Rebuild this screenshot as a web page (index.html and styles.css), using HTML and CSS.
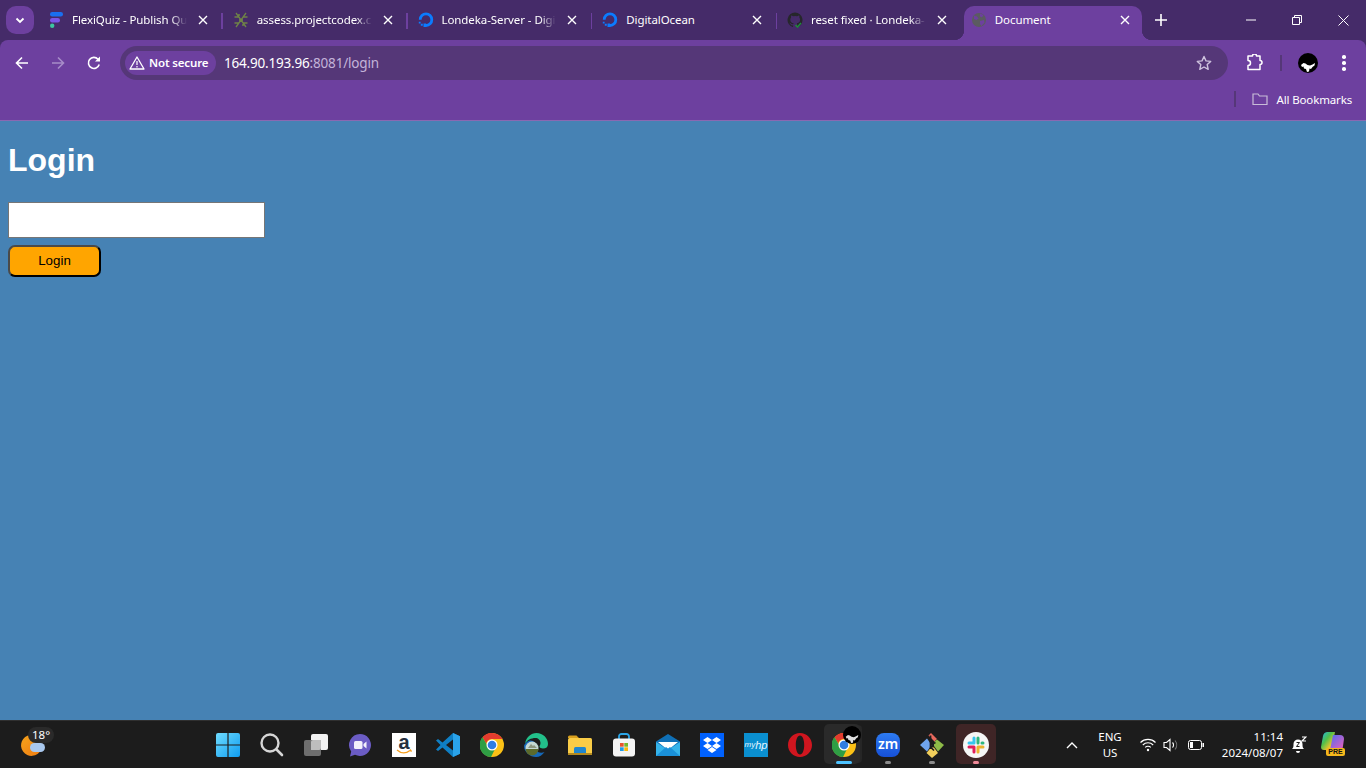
FILE: index.html
```html
<!DOCTYPE html>
<html lang="en">
<head>
<meta charset="utf-8">
<title>Document</title>
<link rel="stylesheet" href="styles.css">
</head>
<body>
<div class="browser">
  <div class="tabstrip">
    <button class="expander"><svg width="12" height="12" viewBox="0 0 12 12"><path d="M2.500 4.500 6 8l3.500-3.500" fill="none" stroke="#fff" stroke-width="1.800"/></svg></button>
    <div class="tab sep">
      <svg class="fav" width="16" height="16" viewBox="0 0 16 16"><rect x="2" y="0" width="13" height="4.500" rx="2.200" fill="#1a6ff0"/><rect x="2" y="6" width="10" height="4.500" rx="2.200" fill="#7a55e8"/><circle cx="4.200" cy="13.800" r="2.200" fill="#3cc6a0"/></svg>
      <span class="title">FlexiQuiz - Publish Qu</span>
      <svg class="close" width="10" height="10" viewBox="0 0 10 10"><path d="M1 1l8 8M9 1 1 9" stroke="#fff" stroke-width="1.400"/></svg>
    </div>
    <div class="tab sep">
      <svg class="fav" width="16" height="16" viewBox="0 0 16 16"><path d="M3 1l10 14M13 1 3 15M1.500 5h4M10.500 11h4M10.500 5h4M1.500 11h4M6 8h4M5 3h2M9 13h2" stroke="#6f8347" stroke-width="1.300" fill="none"/></svg>
      <span class="title">assess.projectcodex.co</span>
      <svg class="close" width="10" height="10" viewBox="0 0 10 10"><path d="M1 1l8 8M9 1 1 9" stroke="#fff" stroke-width="1.400"/></svg>
    </div>
    <div class="tab sep">
      <svg class="fav" width="16" height="16" viewBox="0 0 16 16"><path d="M8 13.500a5.800 5.800 0 1 0-5.800-5.800" fill="none" stroke="#0b7cff" stroke-width="2.800"/><path d="M5.500 11.500h2.500v3.500H5.500zM2.800 11.800h2v2h-2zM.8 9.800h1.800v1.800H.8z" fill="#0b7cff"/></svg>
      <span class="title">Londeka-Server - Digi</span>
      <svg class="close" width="10" height="10" viewBox="0 0 10 10"><path d="M1 1l8 8M9 1 1 9" stroke="#fff" stroke-width="1.400"/></svg>
    </div>
    <div class="tab sep">
      <svg class="fav" width="16" height="16" viewBox="0 0 16 16"><path d="M8 13.500a5.800 5.800 0 1 0-5.800-5.800" fill="none" stroke="#0b7cff" stroke-width="2.800"/><path d="M5.500 11.500h2.500v3.500H5.500zM2.800 11.800h2v2h-2zM.8 9.800h1.800v1.800H.8z" fill="#0b7cff"/></svg>
      <span class="title solid">DigitalOcean</span>
      <svg class="close" width="10" height="10" viewBox="0 0 10 10"><path d="M1 1l8 8M9 1 1 9" stroke="#fff" stroke-width="1.400"/></svg>
    </div>
    <div class="tab">
      <svg class="fav" width="16" height="16" viewBox="0 0 16 16"><path d="M8 .5a7.500 7.500 0 0 0-2.400 14.600c.4.100.5-.2.500-.4v-1.400c-2.100.5-2.500-1-2.500-1-.4-.9-.9-1.100-.9-1.100-.7-.5.100-.5.100-.5.800.100 1.200.8 1.200.8.700 1.200 1.800.8 2.200.6.100-.5.300-.8.500-1-1.700-.2-3.400-.8-3.400-3.700 0-.8.300-1.500.8-2-.1-.2-.3-1 .1-2 0 0 .6-.2 2.100.8a7 7 0 0 1 3.800 0c1.400-1 2.100-.8 2.100-.8.400 1 .1 1.800.1 2 .5.500.8 1.200.8 2 0 2.900-1.800 3.500-3.400 3.700.3.200.5.700.5 1.400v2.100c0 .2.100.5.500.4A7.500 7.500 0 0 0 8 .5z" fill="#26272b"/><path d="M8.500 13l2 2 3.500-4" fill="none" stroke="#1f8a3c" stroke-width="1.500"/></svg>
      <span class="title">reset fixed · Londeka-</span>
      <svg class="close" width="10" height="10" viewBox="0 0 10 10"><path d="M1 1l8 8M9 1 1 9" stroke="#fff" stroke-width="1.400"/></svg>
    </div>
    <div class="tab active">
      <svg class="fav" width="16" height="16" viewBox="0 0 16 16"><circle cx="8" cy="8" r="7" fill="#5b5b60"/><path d="M3 3.500l3 1 1.500 2-2 1.500L3 7zM9 1.500l3.500 1.500-1.500 2.500-2-1zM9 9l4-1 .5 2.500-3 3.500L9 12z" fill="#6d409f"/></svg>
      <span class="title solid">Document</span>
      <svg class="close" width="10" height="10" viewBox="0 0 10 10"><path d="M1 1l8 8M9 1 1 9" stroke="#fff" stroke-width="1.400"/></svg>
    </div>
    <button class="newtab"><svg width="12" height="12" viewBox="0 0 12 12"><path d="M6 0v12M0 6h12" stroke="#fff" stroke-width="1.600"/></svg></button>
    <div class="winctl">
      <span class="winbtn"><svg width="10" height="10" viewBox="0 0 10 10"><path d="M0 5h10" stroke="#fff" stroke-width="1"/></svg></span>
      <span class="winbtn"><svg width="10" height="10" viewBox="0 0 10 10"><path d="M.5 2.500h7v7h-7zM2.500 2.500V.5h7v7h-2" fill="none" stroke="#fff" stroke-width="1"/></svg></span>
      <span class="winbtn"><svg width="11" height="11" viewBox="0 0 11 11"><path d="M.5.500l10 10M10.500.500l-10 10" stroke="#fff" stroke-width="1"/></svg></span>
    </div>
  </div>

  <div class="toolbar">
    <span class="navbtn"><svg width="16" height="16" viewBox="0 0 16 16"><path d="M14 8H3M8 2.500 2.500 8 8 13.500" fill="none" stroke="#fff" stroke-width="1.600"/></svg></span>
    <span class="navbtn"><svg width="16" height="16" viewBox="0 0 16 16"><path d="M2 8h11M8 2.500 13.500 8 8 13.500" fill="none" stroke="#a78cc8" stroke-width="1.600"/></svg></span>
    <span class="navbtn"><svg width="16" height="16" viewBox="0 0 16 16"><path d="M13.200 9.500A5.500 5.500 0 1 1 12 4.200L13.500 5.500" fill="none" stroke="#fff" stroke-width="1.600"/><path d="M14 1.500V6.500H9z" fill="#fff"/></svg></span>
    <div class="omnibox">
      <span class="chip"><svg width="16" height="14" viewBox="0 0 16 14"><path d="M8 1 15 13H1z" fill="none" stroke="#fff" stroke-width="1.300" stroke-linejoin="round"/><path d="M8 5v4M8 10v1.500" stroke="#fff" stroke-width="1.200"/></svg><b>Not secure</b></span>
      <span class="url">164.90.193.96<span class="dim">:8081/login</span></span>
      <svg class="star" width="16" height="16" viewBox="0 0 16 16"><path d="M8 1.500l2 4.400 4.700.5-3.500 3.200 1 4.700L8 12l-4.200 2.300 1-4.700L1.300 6.400 6 5.900z" fill="none" stroke="#cfc3de" stroke-width="1.400" stroke-linejoin="round"/></svg>
    </div>
    <span class="tool-ext"><svg width="18" height="18" viewBox="0 0 18 18"><path d="M2 2.500h4.500a2 2 0 0 1 4 0H14V7a2 2 0 0 1 0 4v5H2v-4a2.500 2.500 0 0 0 0-5z" transform="translate(0 -.5)" fill="none" stroke="#fff" stroke-width="1.500" stroke-linejoin="round"/></svg></span>
    <span class="tool-sep"></span>
    <span class="avatar"><svg width="20" height="20" viewBox="0 0 20 20"><circle cx="10" cy="10" r="10" fill="#000"/><path d="M3 12l2.500-2 2 .5 2 1.500 2.500.5 2.500-1 2.500-1.500-.5 2.500-2 1.500-1.500 2-1.500-.5-.5 3-2 .5-1-3-2-.5-.5-2-1.500.5z" fill="#fff"/></svg></span>
    <span class="menu"><i></i><i></i><i></i></span>
  </div>

  <div class="bookmarks">
    <span class="bm-sep"></span>
    <svg width="16" height="14" viewBox="0 0 16 14"><path d="M1 12.500V2h5l1.500 2H15v8.500z" fill="none" stroke="#c8bcd8" stroke-width="1.200"/></svg>
    <span class="bm-label">All Bookmarks</span>
  </div>

  <main class="page">
    <h1>Login</h1>
    <form class="form">
      <input class="field" type="text">
      <button class="submit" type="button">Login</button>
    </form>
  </main>

  <footer class="taskbar">
    <div class="tb-left">
      <svg class="weather" width="26" height="26" viewBox="0 0 26 26"><defs><linearGradient id="sun" x1="0" y1="0" x2="1" y2="1"><stop offset="0" stop-color="#f5a21b"/><stop offset="1" stop-color="#ef7d12"/></linearGradient></defs><path d="M10 3a10.500 10.500 0 1 0 11 15c-6 1-10-2-11-7-.4-3 0-6 0-8z" fill="url(#sun)"/><circle cx="11" cy="13" r="8" fill="url(#sun)"/><rect x="10" y="11" width="15" height="9" rx="4.500" fill="#a9c8ee"/></svg>
      <span class="temp">18°</span>
    </div>
    <div class="tb-center">
      <span class="task"><svg width="24" height="24" viewBox="0 0 24 24"><defs><linearGradient id="w" x1="0" y1="0" x2="1" y2="1"><stop offset="0" stop-color="#6fdcff"/><stop offset="1" stop-color="#0f9cf0"/></linearGradient></defs><path d="M0 2a2 2 0 0 1 2-2h9.400v11.400H0zM12.600 0H22a2 2 0 0 1 2 2v9.400H12.600zM0 12.600h11.400V24H2a2 2 0 0 1-2-2zM12.600 12.600H24V22a2 2 0 0 1-2 2h-9.400z" fill="url(#w)"/></svg></span>
      <span class="task"><svg width="24" height="24" viewBox="0 0 24 24"><circle cx="10" cy="10" r="8.500" fill="none" stroke="#d6d6d6" stroke-width="2.400"/><path d="M16.500 16.500l5.500 5.500" stroke="#d6d6d6" stroke-width="2.600" stroke-linecap="round"/></svg></span>
      <span class="task"><svg width="26" height="24" viewBox="0 0 26 24"><rect x="8" y="1" width="17" height="16" rx="2" fill="#f2f2f2"/><rect x="1" y="7" width="17" height="16" rx="2" fill="#6e6e6e"/><path d="M8 15V9a2 2 0 0 1 2-2h8v8a2 2 0 0 1-2 2H8z" fill="#bdbdbd"/></svg></span>
      <span class="task"><svg width="24" height="24" viewBox="0 0 24 24"><path d="M12 1a11 11 0 1 1-5 20.800L2 23.500l1.200-5A11 11 0 0 1 12 1z" fill="#6b5cc4"/><rect x="6" y="8" width="8.500" height="8" rx="1.500" fill="#f3f1fb"/><path d="M15.500 11l3-2.500v7l-3-2.500z" fill="#f3f1fb"/></svg></span>
      <span class="task"><span class="amazon"><span class="amz-a">a</span><svg class="amz-smile" width="16" height="6" viewBox="0 0 16 6"><path d="M1 1c4 3.500 9 3.500 13 .5M14 .5l1.500 2" fill="none" stroke="#f59e1c" stroke-width="1.300"/></svg></span></span>
      <span class="task"><svg width="24" height="24" viewBox="0 0 24 24"><path d="M17 0l7 3.200v17.600L17 24 6.500 14.500 2 18 0 16.500 4.500 12 0 7.500 2 6l4.500 3.500z" fill="#0f7fc4"/><path d="M17 0l7 3.200v17.600L17 24z" fill="#2aa3ea"/><path d="M17 6.500 10 12l7 5.500z" fill="#1c1c1c"/></svg></span>
      <span class="task"><svg width="24" height="24" viewBox="0 0 24 24"><circle cx="12" cy="12" r="12" fill="#fbc116"/><path d="M12 0a12 12 0 0 1 10.400 6H12a6 6 0 0 0-5.800 4.500L2.500 4.200A12 12 0 0 1 12 0z" fill="#e33b2e"/><path d="M2.500 4.200 8 13.500a6 6 0 0 0 6.500 3.500L11 24A12 12 0 0 1 2.500 4.200z" fill="#2f9e44"/><circle cx="12" cy="12" r="5.500" fill="#fff"/><circle cx="12" cy="12" r="4.300" fill="#2f7de1"/></svg></span>
      <span class="task"><svg width="24" height="24" viewBox="0 0 24 24"><path d="M1 11C2 4 7 0 12.500 0 19 0 24 5 24 11c0 3-2 4.500-5 4.500-2 0-3.500-.8-3.500-2 0-1 1-1.500 1-3.500 0-3-2.500-5-5-5C7 5 3 7 1 11z" fill="#22c08a"/><path d="M1 11c2-3 5-4.500 8-3 3 1.500 4.500 5 3 8-.5 1 .5 2 2 3 2 1 4.500 1 6.500 0-2 3-5 5-8.500 5C6 24 0 19 0 13c0-.7.300-1.400 1-2z" fill="#1668b8"/><circle cx="8" cy="15" r="6.500" fill="#c4d8d4"/><path d="M1.500 16h13a6.500 6.500 0 0 1-13 0z" fill="#5c6a2c"/><path d="M4 15l3-4 2 2 1-1 3 3z" fill="#8c9680"/></svg></span>
      <span class="task"><svg width="26" height="24" viewBox="0 0 26 24"><path d="M1 4a1.500 1.500 0 0 1 1.500-1.500h7L12 5H1z" fill="#d9a01e"/><rect x="1" y="5" width="24" height="17" rx="1.500" fill="#f9cc47"/><path d="M7 15.500a1.500 1.500 0 0 1 1.500-1.500h9a1.500 1.500 0 0 1 1.500 1.500V22H7z" fill="#1f86cf"/><rect x="1" y="20" width="24" height="2" fill="#b48a1f"/></svg></span>
      <span class="task"><svg width="24" height="24" viewBox="0 0 24 24"><path d="M7 7V3.500A2.500 2.500 0 0 1 9.500 1h5A2.500 2.500 0 0 1 17 3.500V7" fill="none" stroke="#2aa5e8" stroke-width="1.800"/><rect x="1" y="5.500" width="22" height="18" rx="3" fill="#f4f4f4"/><rect x="8" y="10" width="3.700" height="3.700" fill="#e8542d"/><rect x="12.300" y="10" width="3.700" height="3.700" fill="#76b82a"/><rect x="8" y="14.300" width="3.700" height="3.700" fill="#1f9ce8"/><rect x="12.300" y="14.300" width="3.700" height="3.700" fill="#fbb80c"/></svg></span>
      <span class="task"><svg width="24" height="24" viewBox="0 0 24 24"><path d="M12 1 24 8.500V23H0V8.500z" fill="#0f6fb5"/><path d="M0 9 12 17 24 9V23H0z" fill="#35b3ea"/><path d="M2 9h20l-10 8z" fill="#fff"/><path d="M0 23 10 14l2 1.500 2-1.500 10 9z" fill="#1a90d8"/></svg></span>
      <span class="task"><span class="dropbox"><svg width="18" height="16" viewBox="0 0 18 16"><path d="M4.500 0 9 3 4.500 6 0 3zM13.500 0 18 3l-4.500 3L9 3zM4.500 6 9 9l-4.500 3L0 9zM13.500 6 18 9l-4.500 3L9 9zM4.500 13l4.500-3 4.500 3L9 16z" fill="#fff"/></svg></span></span>
      <span class="task"><span class="myhp"><i>my</i><b>hp</b></span></span>
      <span class="task"><svg width="24" height="24" viewBox="0 0 24 24"><path fill-rule="evenodd" d="M12 0c6.600 0 12 5.400 12 12s-5.400 12-12 12S0 18.600 0 12 5.400 0 12 0zm0 2.500c-2.500 0-4.200 4.200-4.200 9.500s1.700 9.500 4.200 9.500 4.200-4.200 4.200-9.500-1.700-9.500-4.200-9.500z" fill="#d0161f"/></svg></span>
      <span class="task task-open task-active"><svg width="24" height="24" viewBox="0 0 24 24"><circle cx="12" cy="12" r="12" fill="#fbc116"/><path d="M12 0a12 12 0 0 1 10.400 6H12a6 6 0 0 0-5.800 4.500L2.500 4.200A12 12 0 0 1 12 0z" fill="#e33b2e"/><path d="M2.500 4.200 8 13.500a6 6 0 0 0 6.500 3.500L11 24A12 12 0 0 1 2.500 4.200z" fill="#2f9e44"/><circle cx="12" cy="12" r="5.500" fill="#fff"/><circle cx="12" cy="12" r="4.300" fill="#2f7de1"/></svg><svg class="task-badge" width="18" height="18" viewBox="0 0 20 20"><circle cx="10" cy="10" r="10" fill="#000"/><path d="M3 12l2.500-2 2 .5 2 1.500 2.500.5 2.500-1 2.500-1.500-.5 2.500-2 1.500-1.500 2-1.500-.5-.5 3-2 .5-1-3-2-.5-.5-2-1.500.5z" fill="#ddd"/></svg></span>
      <span class="task task-run"><span class="zoom">zm</span></span>
      <span class="task task-run"><svg width="26" height="26" viewBox="0 0 26 26"><path d="M8 6.500l4.500 6.500L8 19.500 1 13z" fill="#6fa4ee"/><path d="M9.500 3.500 12 1l6 6-2.500 2.500z" fill="#e8685c"/><path d="M18 7.500 25 13l-6 6.500-4-5.500 0-4z" fill="#8ebb48"/><path d="M7.500 21 12 15.500h3L19 21l-6 5z" fill="#f1cf5b"/><path d="M11.500 3.500v13.500M11.500 13l5-2.500M11.500 15l3.500 3.500" stroke="#1c1c1c" stroke-width="1.700" fill="none"/></svg></span>
      <span class="task task-slack"><svg width="26" height="26" viewBox="0 0 26 26"><circle cx="13" cy="13" r="13" fill="#f6f6f6"/><g stroke-width="3" stroke-linecap="round"><path d="M11 6v5M6 11h5" stroke="#36c5f0" fill="none"/><path d="M15 6v5M20 11h-1" stroke="#2eb67d" fill="none"/><path d="M15 20v-5M20 15h-5" stroke="#ecb22e" fill="none"/><path d="M11 20v-5M6 15h5" stroke="#e01e5a" fill="none"/></g></svg></span>
    </div>
    <div class="tb-right">
      <svg class="tray-chev" width="12" height="8" viewBox="0 0 12 8"><path d="M1 7l5-5 5 5" fill="none" stroke="#fff" stroke-width="1.400"/></svg>
      <span class="lang">ENG<br>US</span>
      <svg class="tray-wifi" width="16" height="14" viewBox="0 0 16 14"><path d="M.5 4.500a10.500 10.500 0 0 1 15 0M2.800 7a7.300 7.300 0 0 1 10.400 0M5.200 9.400a3.900 3.900 0 0 1 5.600 0" fill="none" stroke="#fff" stroke-width="1.100"/><circle cx="8" cy="12" r="1.200" fill="#fff"/></svg>
      <svg class="tray-vol" width="16" height="14" viewBox="0 0 16 14"><path d="M1 4.500h2.500L7 1.500v11l-3.500-3H1z" fill="none" stroke="#fff" stroke-width="1.100"/><path d="M9.500 4.500a3.500 3.500 0 0 1 0 5" fill="none" stroke="#fff" stroke-width="1.100"/><path d="M12 2.500a7 7 0 0 1 0 9" fill="none" stroke="#777" stroke-width="1.100"/></svg>
      <svg class="tray-bat" width="16" height="10" viewBox="0 0 16 10"><rect x=".5" y=".5" width="13" height="9" rx="2" fill="none" stroke="#fff"/><rect x="2" y="2" width="3" height="6" fill="#fff"/><rect x="14.500" y="3" width="1.500" height="4" fill="#fff"/></svg>
      <span class="clock">11:14<br>2024/08/07</span>
      <svg class="tray-bell" width="16" height="18" viewBox="0 0 16 18"><path d="M1 13c1.500-1 1.500-3 1.500-5A4.500 4.500 0 0 1 7 3.500 4.500 4.500 0 0 1 11.500 8c0 2 0 4 1.500 5z" fill="#fff"/><path d="M5 15h4a2 2 0 0 1-4 0z" fill="#fff"/><path d="M5.500 6.500h3l-3 4h3" fill="none" stroke="#1c1c1c" stroke-width="1"/><path d="M11 1h4l-4 4h4" fill="none" stroke="#fff" stroke-width="1.200"/></svg>
      <span class="copilot"><svg width="24" height="20" viewBox="0 0 24 20"><defs><linearGradient id="cp" x1="0" y1="0" x2="1" y2="1"><stop offset="0" stop-color="#1fb5f0"/><stop offset=".4" stop-color="#4fc04a"/><stop offset=".75" stop-color="#f5c52c"/><stop offset="1" stop-color="#f08a3c"/></linearGradient><linearGradient id="cq" x1="0" y1="0" x2="1" y2="1"><stop offset="0" stop-color="#4f6af2"/><stop offset="1" stop-color="#ef5fb8"/></linearGradient></defs><path d="M6 0h8l-3 14a5 5 0 0 1-5 4H3a3 3 0 0 1-3-3l2-11a5 5 0 0 1 4-4z" fill="url(#cp)"/><path d="M12 3h7a4 4 0 0 1 4 4l-1 7a4 4 0 0 1-4 4h-9z" fill="url(#cq)"/></svg><span class="pre">PRE</span></span>
    </div>
  </footer>
</div>
</body>
</html>
```

FILE: styles.css
```css
* { box-sizing: border-box; }
html, body { margin: 0; height: 100%; overflow: hidden; }
body { font-family: "Noto Sans", "Liberation Sans", sans-serif; }
.browser { width: 1366px; height: 768px; display: flex; flex-direction: column; background: #452b69; }

.tabstrip { height: 40px; flex: none; display: flex; align-items: flex-start; background: #452b69; padding-left: 6px; }
.expander { width: 28px; height: 28px; margin-top: 6px; margin-right: 4px; padding: 0; border: 0; border-radius: 10px; background: #6d409f; display: flex; align-items: center; justify-content: center; }
.tab { position: relative; width: 184.75px; height: 34px; margin-top: 6px; padding: 0 15px 0 10px; display: flex; align-items: center; color: #fff; font-size: 11.5px; letter-spacing: -0.08px; }
.tab.sep::after { content: ""; position: absolute; right: 0; top: 7px; height: 16px; width: 1.5px; background: #6d409f; }
.tab .fav { flex: none; margin-right: 8px; margin-top: -6px; }
.title { flex: 1; min-width: 0; white-space: nowrap; margin-top: -7px; -webkit-mask-image: linear-gradient(90deg, #000 86%, transparent 100%); mask-image: linear-gradient(90deg, #000 86%, transparent 100%); }
.title.solid { -webkit-mask-image: none; mask-image: none; }
.close { flex: none; margin-left: 11px; margin-top: -6px; }
.tab.active { width: 178px; margin-left: 2px; background: #6d409f; border-radius: 10px 10px 0 0; padding: 0 12px 0 7px; }
.tab.active::before, .tab.active::after { content: ""; position: absolute; bottom: 0; width: 10px; height: 10px; }
.tab.active::before { left: -10px; background: radial-gradient(circle at 0 0, transparent 10px, #6d409f 10.5px); }
.tab.active::after { right: -10px; background: radial-gradient(circle at 100% 0, transparent 10px, #6d409f 10.5px); }
.newtab { width: 28px; height: 28px; margin: 6px 0 0 5px; padding: 0; border: 0; background: transparent; display: flex; align-items: center; justify-content: center; }
.winctl { margin-left: auto; display: flex; height: 40px; }
.winbtn { width: 46px; display: flex; align-items: center; justify-content: center; }

.toolbar { height: 46px; flex: none; display: flex; align-items: center; background: #6d409f; padding: 0 4px; border-radius: 8px 8px 0 0; }
.navbtn { width: 36px; height: 34px; display: flex; align-items: center; justify-content: center; }
.omnibox { width: 1108px; height: 34px; margin: 0 0 0 8px; background: #553778; border-radius: 17px; display: flex; align-items: center; padding: 0 16px 0 5px; }
.chip { height: 24px; width: 91px; background: #6d409f; border-radius: 12px; display: flex; align-items: center; padding-left: 4px; gap: 4px; color: #fff; font-size: 11.5px; letter-spacing: -0.15px; flex: none; }
.chip b { font-weight: 600; margin-top: -1px; }
.url { margin-left: 8px; color: #fff; font-size: 13.5px; letter-spacing: -0.19px; }
.dim { color: #c3b3d8; }
.star { margin-left: auto; }
.tool-ext { width: 18px; margin-left: 18px; display: flex; }
.tool-sep { width: 2px; height: 16px; background: #553778; margin-left: 16px; flex: none; }
.avatar { width: 20px; height: 20px; margin-left: 16px; display: flex; }
.menu { width: 4px; margin-left: 24px; display: flex; flex-direction: column; gap: 2.5px; }
.menu i { width: 3.5px; height: 3.5px; border-radius: 50%; background: #fff; }

.bookmarks { height: 35px; flex: none; display: flex; align-items: center; justify-content: flex-end; background: #6d409f; padding: 0 14px 8px 0; border-bottom: 1px solid #8a68b2; }
.bm-sep { width: 2px; height: 16px; background: #553778; margin-right: 16px; }
.bm-label { color: #fff; font-size: 11.5px; letter-spacing: -0.15px; margin-left: 9px; }

.page { flex: 1; min-height: 0; padding: 0 8px; background: #4682b4; display: flow-root; font-family: "Liberation Sans", Arial, sans-serif; }
.page h1 { margin: 21px 0 23px; font-size: 32px; line-height: 37px; font-weight: 700; color: #fff; }
.form { display: flex; flex-direction: column; align-items: flex-start; gap: 7px; }
.field { width: 257px; height: 36px; background: #fff; border: 1px solid #767676; padding: 0; margin: 0; }
.submit { width: 93px; height: 32px; background: #ffa500; border: 2px solid; border-color: #4a4a4a #000 #000 #4a4a4a; border-radius: 7px; font: 13.33px "Liberation Sans", Arial, sans-serif; color: #000; padding: 0 0 2px; }

.taskbar { height: 48px; flex: none; background: #1c1c1c; border-top: 1px solid #2f2f2f; display: flex; align-items: stretch; color: #fff; }
.tb-left { position: relative; width: 206px; flex: none; padding: 11px 0 0 20px; }
.weather { display: block; }
.temp { position: absolute; left: 28px; top: 6px; height: 16px; padding: 0 4px; background: #2a2a2a; border-radius: 8px; font-size: 11.5px; line-height: 16px; }
.tb-center { display: flex; width: 792px; flex: none; }
.task { position: relative; width: 44px; height: 47px; display: flex; align-items: center; justify-content: center; }
.amazon { position: relative; width: 24px; height: 24px; background: #fff; display: block; color: #232f3e; text-align: center; font: 700 20px/19px "Liberation Sans", sans-serif; }
.amz-smile { position: absolute; left: 4px; bottom: 2px; }
.dropbox { width: 24px; height: 24px; background: #0061fe; display: flex; align-items: center; justify-content: center; }
.myhp { width: 24px; height: 24px; background: #0a8fd0; display: flex; align-items: center; justify-content: center; font: 8px "Liberation Sans", sans-serif; color: #e8f6ff; }
.myhp i { font-style: italic; }
.myhp b { font-style: italic; font-weight: 400; font-size: 11px; }
.zoom { width: 24px; height: 24px; border-radius: 8px; background: linear-gradient(180deg, #2d7bf2, #1650d8); color: #fff; font: 600 14px/22px "Noto Sans", sans-serif; text-align: center; display: block; }
.task-open::before { content: ""; position: absolute; left: 2px; top: 3px; width: 36px; height: 40px; border-radius: 5px; background: #2a2a2a; box-shadow: 3px 0 0 -1px #262626; }
.task-open svg { position: relative; }
.task-active::after { content: ""; position: absolute; left: 14px; bottom: 4px; width: 16px; height: 3px; border-radius: 2px; background: #4cc2ff; }
.task-badge { position: absolute !important; left: 21px; top: 5px; }
.task-run::after { content: ""; position: absolute; left: 19px; bottom: 4px; width: 6px; height: 3px; border-radius: 2px; background: #8c8c8c; }
.task-slack::before { content: ""; position: absolute; left: 2px; top: 3px; width: 40px; height: 40px; border-radius: 5px; background: #3f2526; }
.task-slack svg { position: relative; }
.task-slack::after { content: ""; position: absolute; left: 19px; bottom: 4px; width: 6px; height: 3px; border-radius: 2px; background: #f08a9a; }

.tb-right { flex: 1; display: flex; align-items: center; font-size: 11.5px; padding-left: 68px; }
.tray-chev { flex: none; }
.lang { width: 40px; margin-left: 12px; text-align: center; line-height: 16px; }
.tray-wifi { margin-left: 10px; flex: none; }
.tray-vol { margin-left: 7px; flex: none; }
.tray-bat { margin-left: 9px; flex: none; }
.clock { width: 79px; text-align: right; line-height: 16px; flex: none; }
.tray-bell { margin-left: 8px; flex: none; }
.copilot { position: relative; margin-left: 14px; width: 24px; height: 24px; display: block; flex: none; top: -1px; }
.pre { position: absolute; left: 5px; top: 16px; width: 19px; height: 8px; border-radius: 2px; background: #f5b81c; color: #111; font: 700 7px/8px "Liberation Sans", sans-serif; text-align: center; }
```
